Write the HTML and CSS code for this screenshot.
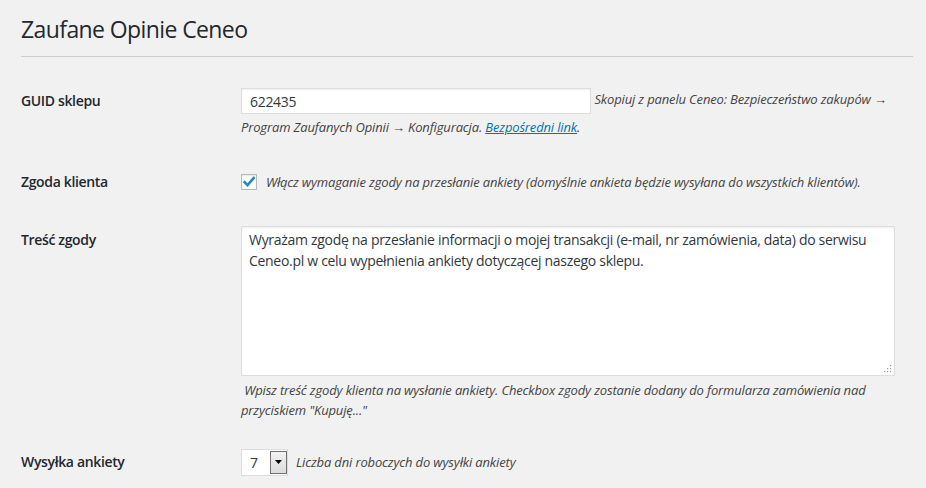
FILE: index.html
```html
<!DOCTYPE html>
<html lang="pl">
<head>
<meta charset="utf-8">
<title>Zaufane Opinie Ceneo</title>
<link rel="stylesheet" href="styles.css">
</head>
<body>
<div class="wrap">
  <h1 class="page-title">Zaufane Opinie Ceneo</h1>
  <hr class="sep">
  <form class="form-table">
    <div class="row row-guid">
      <div class="th">GUID sklepu</div>
      <div class="td">
        <input class="text-input" type="text" value="622435"> <span class="description">Skopiuj z panelu Ceneo: Bezpieczeństwo zakupów → Program Zaufanych Opinii → Konfiguracja. <a href="#">Bezpośredni link</a>.</span>
      </div>
    </div>
    <div class="row row-consent">
      <div class="th">Zgoda klienta</div>
      <div class="td">
        <label class="check-label">
          <span class="checkbox"><svg viewBox="0 0 16 16" width="16" height="16"><path d="M3.6 8.2 L6.6 11.2 L12.6 4.2" fill="none" stroke="#1e8cbe" stroke-width="2.6" stroke-linecap="square"/></svg></span>
          <span class="description">Włącz wymaganie zgody na przesłanie ankiety (domyślnie ankieta będzie wysyłana do wszystkich klientów).</span>
        </label>
      </div>
    </div>
    <div class="row row-text">
      <div class="th">Treść zgody</div>
      <div class="td">
        <div class="textarea-box">
          <textarea class="textarea">Wyrażam zgodę na przesłanie informacji o mojej transakcji (e-mail, nr zamówienia, data) do serwisu Ceneo.pl w celu wypełnienia ankiety dotyczącej naszego sklepu.</textarea>
          <svg class="grip" viewBox="0 0 9 9" width="9" height="9"><rect x="7" y="1" width="1.2" height="1.2" fill="#999"/><rect x="4" y="4" width="1.2" height="1.2" fill="#999"/><rect x="7" y="4" width="1.2" height="1.2" fill="#999"/><rect x="1" y="7" width="1.2" height="1.2" fill="#999"/><rect x="4" y="7" width="1.2" height="1.2" fill="#999"/><rect x="7" y="7" width="1.2" height="1.2" fill="#999"/></svg>
        </div>
        <p class="description block">&nbsp;Wpisz treść zgody klienta na wysłanie ankiety. Checkbox zgody zostanie dodany do formularza zamówienia nad przyciskiem "Kupuję..."</p>
      </div>
    </div>
    <div class="row row-select">
      <div class="th">Wysyłka ankiety</div>
      <div class="td select-line">
        <span class="select"><span class="select-value">7</span><span class="select-btn"><svg viewBox="0 0 7 4" width="7" height="4"><path d="M0 0 H7 L3.5 4 Z" fill="#000"/></svg></span></span>
        <span class="description">Liczba dni roboczych do wysyłki ankiety</span>
      </div>
    </div>
  </form>
</div>
</body>
</html>
```
FILE: styles.css
```css
html, body {
  margin: 0;
  padding: 0;
  background: #f1f1f1;
}
body {
  font-family: "Open Sans", "Noto Sans", sans-serif;
  font-size: 13px;
  color: #444;
  width: 926px;
  height: 488px;
  overflow: hidden;
}
.wrap {
  padding: 0 13px 0 21px;
}
.page-title {
  margin: 0;
  padding: 15px 0 0;
  font-size: 23px;
  font-weight: 400;
  line-height: 29px;
  color: #23282d;
  letter-spacing: -0.6px;
}
.sep {
  margin: 12px 0 0;
  border: 0;
  border-top: 1px solid #ccc;
  height: 0;
}
.form-table {
  display: flex;
  flex-direction: column;
  margin-top: 15px;
}
.row {
  display: flex;
}
.th {
  width: 200px;
  flex: none;
  padding: 20px 20px 20px 0;
  font-size: 14px;
  font-weight: 600;
  line-height: 18px;
  color: #23282d;
  letter-spacing: -0.35px;
}
.td {
  flex: 1;
  padding: 15px 18px 15px 0;
  line-height: 26px;
}
.description {
  font-style: italic;
  color: #444;
  font-size: 13px;
  letter-spacing: -0.15px;
}
.description a {
  color: #0073aa;
  text-decoration: underline;
}
.text-input {
  box-sizing: border-box;
  width: 350px;
  height: 26px;
  margin: 1px 0 0;
  padding: 2px 8px;
  border: 1px solid #ddd;
  box-shadow: inset 0 1px 2px rgba(0,0,0,.07);
  background: #fff;
  font-family: inherit;
  font-size: 14px;
  color: #32373c;
  vertical-align: middle;
  outline: none;
  letter-spacing: -0.3px;
}
.row-guid .td {
  padding-top: 14px;
  padding-bottom: 13px;
}
.check-label {
  display: flex;
  align-items: center;
  gap: 9px;
  padding-top: 1px;
}
.row-consent .td {
  padding-bottom: 12px;
}
.checkbox {
  box-sizing: border-box;
  width: 16px;
  height: 16px;
  border: 1px solid #b4b9be;
  background: #fff;
  box-shadow: inset 0 1px 2px rgba(0,0,0,.1);
  display: flex;
  align-items: center;
  justify-content: center;
  flex: none;
}
.checkbox svg {
  display: block;
  margin: -1px;
}
.textarea-box {
  position: relative;
  width: 654px;
  height: 150px;
}
.textarea {
  box-sizing: border-box;
  display: block;
  width: 654px;
  height: 150px;
  margin: 0;
  padding: 2px 7px;
  border: 1px solid #ddd;
  box-shadow: inset 0 1px 2px rgba(0,0,0,.07);
  background: #fff;
  font-family: inherit;
  font-size: 14px;
  line-height: 21px;
  letter-spacing: -0.3px;
  color: #32373c;
  resize: none;
  outline: none;
  overflow: hidden;
}
.grip {
  position: absolute;
  right: 3px;
  bottom: 3px;
}
.description.block {
  margin: 4px 0 0;
  line-height: 20px;
}
.row-text .td {
  padding-bottom: 13px;
}
.select-line {
  display: flex;
  align-items: center;
  gap: 8px;
  line-height: 20px;
}
.select {
  box-sizing: border-box;
  display: flex;
  width: 47px;
  height: 27px;
  border: 1px solid #ddd;
  background: #fff;
  padding: 1px 0 1px 0;
}
.select-value {
  flex: 1;
  padding-left: 8px;
  font-size: 14px;
  line-height: 23px;
  color: #32373c;
}
.select-btn {
  box-sizing: border-box;
  width: 17px;
  border: 1px solid #707070;
  background: linear-gradient(#f2f2f2, #dcdcdc);
  display: flex;
  align-items: center;
  justify-content: center;
}
.select-btn svg { display: block; }
```
